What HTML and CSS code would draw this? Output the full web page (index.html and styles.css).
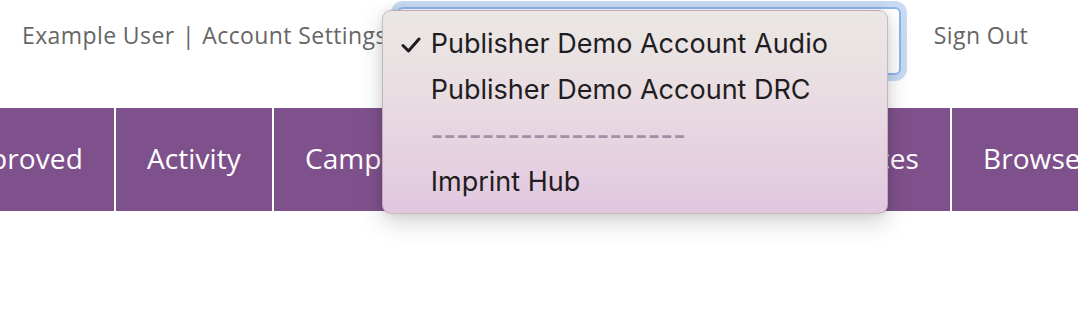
FILE: index.html
```html
<!DOCTYPE html>
<html lang="en">
<head>
<meta charset="utf-8">
<title>Publisher Portal</title>
<link rel="stylesheet" href="styles.css">
</head>
<body>
  <header class="topbar">
    <div class="user-links">
      <a class="link" href="#">Example User</a>
      <span class="divider">|</span>
      <a class="link" href="#">Account Settings</a>
    </div>
    <div class="account-select">
      <div class="select-box"></div>
      <ul class="menu">
        <li class="menu-item checked"><svg class="check" width="20" height="16" viewBox="0 0 20 16"><polyline points="2,8.5 7.5,14 18,2" fill="none" stroke="#1f1d1f" stroke-width="3" stroke-linecap="round" stroke-linejoin="round"/></svg>Publisher Demo Account Audio</li>
        <li class="menu-item">Publisher Demo Account DRC</li>
        <li class="menu-item separator">--------------------</li>
        <li class="menu-item">Imprint Hub</li>
      </ul>
    </div>
    <a class="link signout" href="#">Sign Out</a>
  </header>
  <nav class="mainnav">
    <div class="nav-track">
      <a class="nav-item first" href="#">Approved</a>
      <a class="nav-item" href="#">Activity</a>
      <a class="nav-item" href="#">Campaigns</a>
      <a class="nav-item" href="#">Royalty Reports</a>
      <a class="nav-item" href="#">Resources</a>
      <a class="nav-item" href="#">Browse</a>
    </div>
  </nav>
</body>
</html>
```

FILE: styles.css
```css
* { box-sizing: border-box; }
html, body { margin: 0; padding: 0; background: #ffffff; }
body {
  font-family: "Open Sans", "Lato", sans-serif;
  overflow: hidden;
  width: 1078px;
  height: 314px;
}
.topbar {
  height: 108px;
  display: flex;
  align-items: flex-start;
}
.link { color: #666666; text-decoration: none; }
.user-links {
  margin: 22px 0 0 22px;
  font-size: 23px;
  letter-spacing: 0.4px;
  line-height: 26px;
  color: #666666;
  white-space: nowrap;
}
.divider { margin: 0 1px; }
.account-select {
  position: relative;
  margin: 7px 0 0 10px;
}
.select-box {
  width: 504px;
  height: 68px;
  border: 2px solid #8db7ee;
  border-radius: 6px;
  background: #ffffff;
  box-shadow: 0 0 0 6px #c8dbf3;
}
.menu {
  position: absolute;
  left: -15px;
  top: 3px;
  width: 506px;
  height: 204px;
  margin: 0;
  padding: 10px 0 0;
  list-style: none;
  border-radius: 9px;
  border: 1px solid rgba(120, 110, 120, 0.35);
  background: linear-gradient(180deg, #ebe8e4 0%, #e9dde2 40%, #e2c7df 100%);
  box-shadow: 0 8px 24px rgba(0, 0, 0, 0.18), 0 0 8px rgba(0, 0, 0, 0.08);
  font-family: "Inter", "Noto Sans", sans-serif;
  font-size: 27px;
  color: #1f1d1f;
}
.menu-item {
  height: 46px;
  line-height: 46px;
  padding-left: 48px;
  position: relative;
  white-space: nowrap;
}
.check {
  position: absolute;
  left: 18px;
  top: 16px;
}
.separator {
  color: #a291a3;
  font-weight: 600;
  letter-spacing: 0.2px;
}
.signout {
  margin: 22px 0 0 33px;
  font-size: 23px;
  letter-spacing: 0.4px;
  line-height: 26px;
}
.mainnav {
  height: 103px;
  background: #7f518c;
  overflow: hidden;
}
.nav-track {
  display: flex;
  height: 100%;
  margin-left: -76px;
}
.nav-item {
  display: flex;
  align-items: center;
  padding: 0 31px 3px;
  color: #ffffff;
  text-decoration: none;
  font-size: 28px;
  letter-spacing: 0.1px;
  border-left: 2px solid #ffffff;
  white-space: nowrap;
}
.nav-item.first { border-left: none; }
```
